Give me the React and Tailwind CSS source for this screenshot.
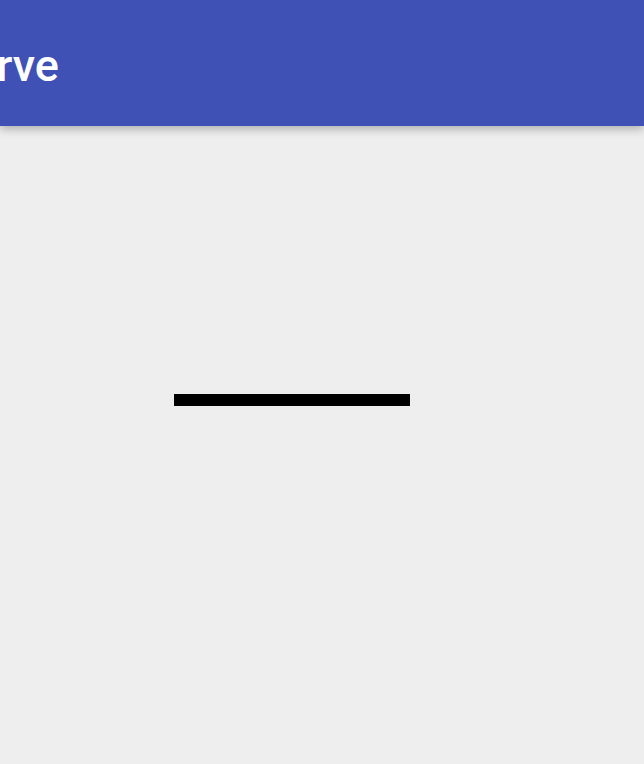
export default function App() {
  return (
    <div className="min-h-screen bg-[#eeeeee] flex flex-col overflow-hidden">
      {/* APP BAR */}
      <header className="h-[126px] bg-[#3f51b5] shadow-[0_3px_9px_rgba(0,0,0,0.28)] relative z-10 flex items-center overflow-hidden">
        <h1 className="ml-[-58px] text-[45px] font-medium text-white whitespace-nowrap font-['Roboto',sans-serif] leading-none pt-[4px]">
          Curve
        </h1>
      </header>

      {/* CONTENT */}
      <main className="flex-1 pt-[268px] pl-[174px]">
        <div className="w-[236px] h-[12px] bg-black" />
      </main>
    </div>
  );
}
